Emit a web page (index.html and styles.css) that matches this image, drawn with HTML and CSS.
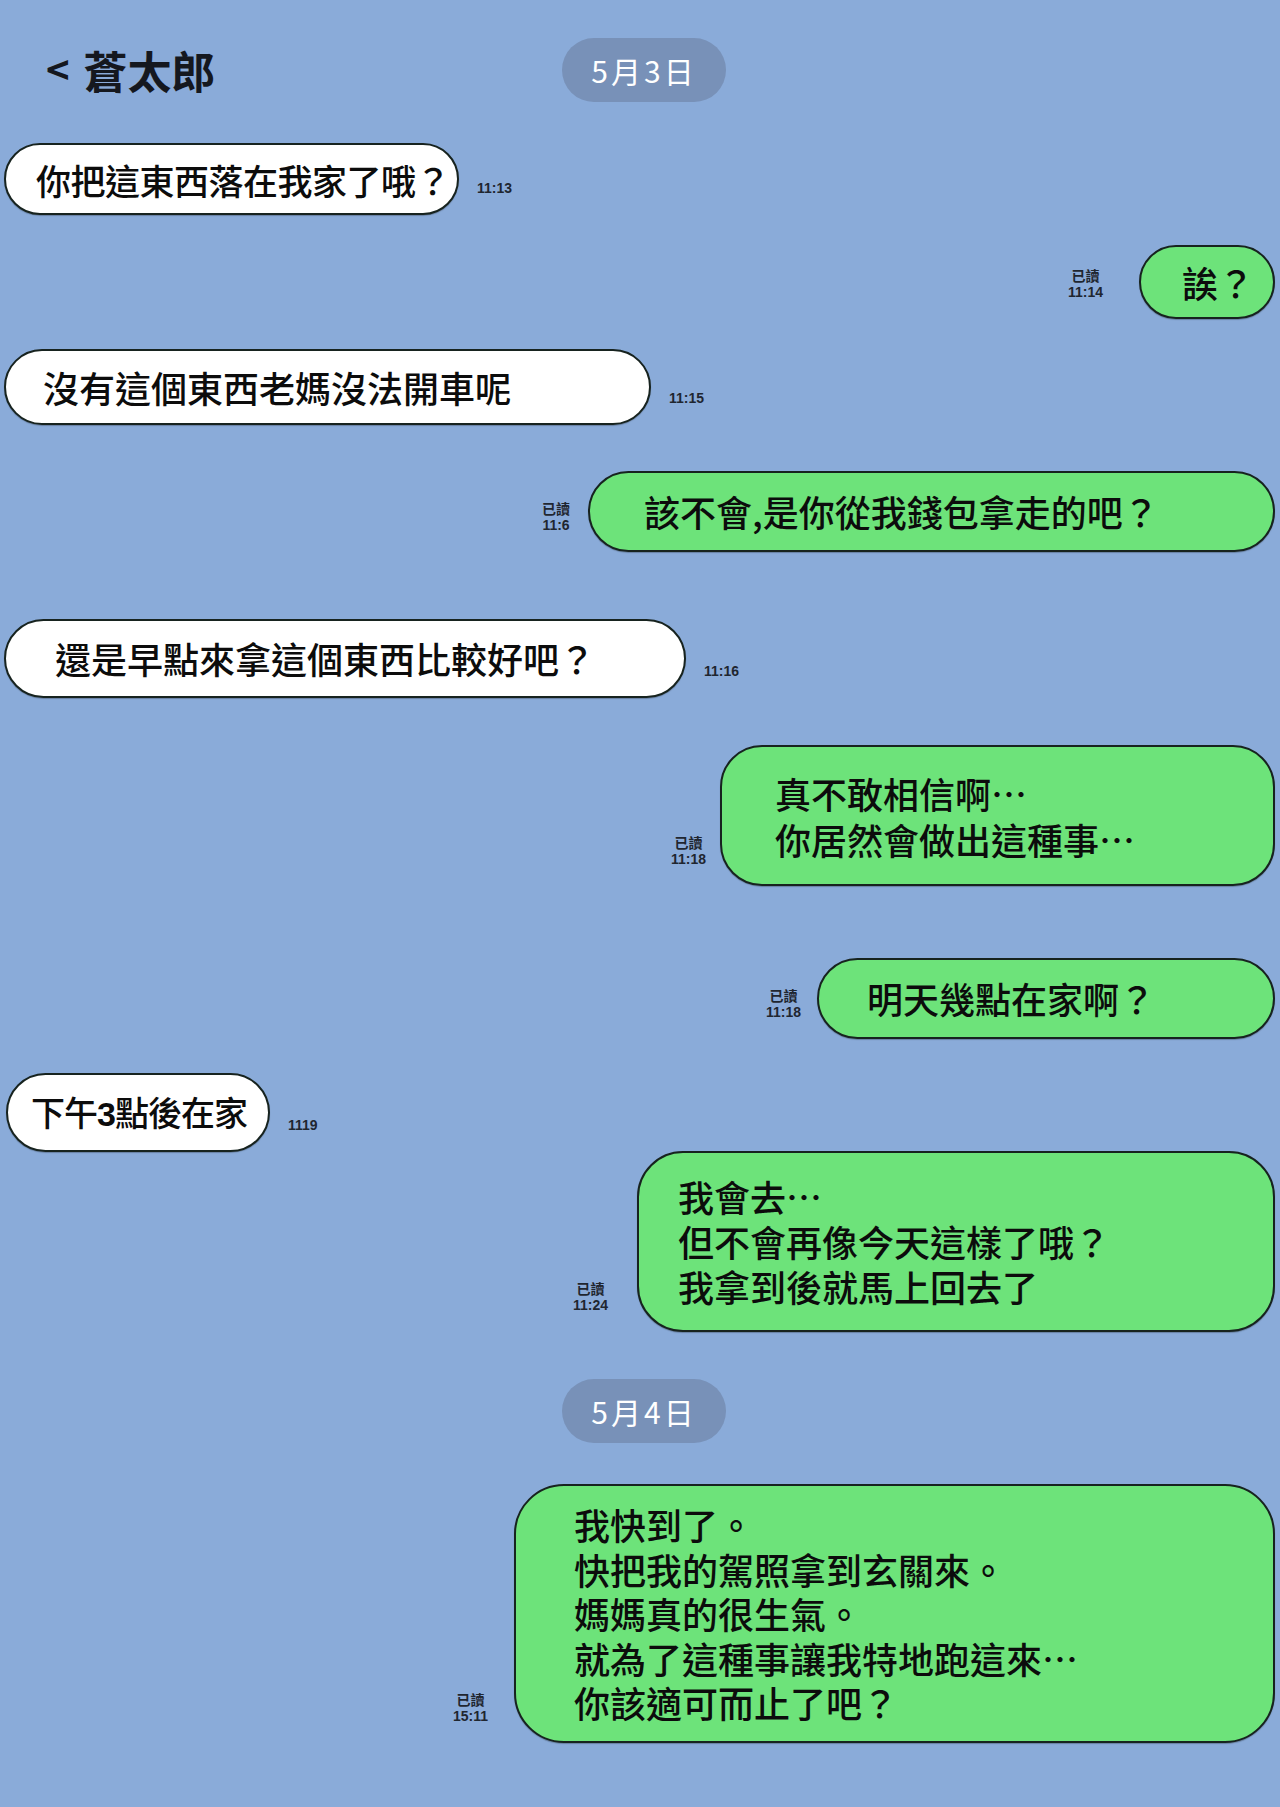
FILE: index.html
```html
<!DOCTYPE html>
<html lang="zh-Hant">
<head>
    <meta charset="UTF-8">
    <meta name="viewport" content="width=device-width, initial-scale=1.0">
    <title>蒼太郎</title>
    <link rel="stylesheet" href="styles.css">
</head>
<body>
    <div class="chat">
        <header class="top">
            <div class="title"><span class="back">&lt;</span>蒼太郎</div>
            <div class="date">5月3日</div>
            <div></div>
        </header>

        <div class="row in m1">
            <div class="bubble">你把這東西落在我家了哦？</div>
            <div class="meta"><span>11:13</span></div>
        </div>

        <div class="row out m2">
            <div class="meta"><span class="read">已讀</span><span>11:14</span></div>
            <div class="bubble">誒？</div>
        </div>

        <div class="row in m3">
            <div class="bubble">沒有這個東西老媽沒法開車呢</div>
            <div class="meta"><span>11:15</span></div>
        </div>

        <div class="row out m4">
            <div class="meta"><span class="read">已讀</span><span>11:6</span></div>
            <div class="bubble">該不會,是你從我錢包拿走的吧？</div>
        </div>

        <div class="row in m5">
            <div class="bubble">還是早點來拿這個東西比較好吧？</div>
            <div class="meta"><span>11:16</span></div>
        </div>

        <div class="row out m6">
            <div class="meta"><span class="read">已讀</span><span>11:18</span></div>
            <div class="bubble">
                <span>真不敢相信啊…</span>
                <span>你居然會做出這種事…</span>
            </div>
        </div>

        <div class="row out m7">
            <div class="meta"><span class="read">已讀</span><span>11:18</span></div>
            <div class="bubble">明天幾點在家啊？</div>
        </div>

        <div class="row in m8">
            <div class="bubble"><span>下午<b class="num">3</b>點後在家</span></div>
            <div class="meta"><span>1119</span></div>
        </div>

        <div class="row out m9">
            <div class="meta"><span class="read">已讀</span><span>11:24</span></div>
            <div class="bubble">
                <span>我會去…</span>
                <span>但不會再像今天這樣了哦？</span>
                <span>我拿到後就馬上回去了</span>
            </div>
        </div>

        <div class="day">
            <div class="date">5月4日</div>
        </div>

        <div class="row out m10">
            <div class="meta"><span class="read">已讀</span><span>15:11</span></div>
            <div class="bubble">
                <span>我快到了。</span>
                <span>快把我的駕照拿到玄關來。</span>
                <span>媽媽真的很生氣。</span>
                <span>就為了這種事讓我特地跑這來…</span>
                <span>你該適可而止了吧？</span>
            </div>
        </div>
    </div>
</body>
</html>
```

FILE: styles.css
```css
body {
    margin: 0;
    padding: 0;
    background-color: #8aabd9;
    font-family: "Noto Sans CJK TC", "Noto Sans CJK JP", sans-serif;
    color: #111;
}
.chat {
    width: 1280px;
    min-height: 1807px;
    box-sizing: border-box;
    padding: 38px 5px 40px 4px;
}
.top {
    display: grid;
    grid-template-columns: 1fr auto 1fr;
    align-items: center;
    height: 64px;
}
.title {
    padding-left: 42px;
    font-size: 44px;
    font-weight: 700;
    color: #15181f;
    display: flex;
    align-items: center;
}
.back {
    font-size: 40px;
    font-weight: 700;
    margin-right: 14px;
    position: relative;
    top: -2px;
}
.date {
    width: 164px;
    height: 64px;
    border-radius: 32px;
    background: #7891b8;
    color: #fff;
    font-size: 30px;
    letter-spacing: 3px;
    display: flex;
    align-items: center;
    justify-content: center;
    margin-left: 9px;
}
.day {
    display: flex;
    justify-content: center;
    margin-top: 47px;
}

/* message rows */
.row {
    display: flex;
    align-items: flex-end;
    column-gap: 18px;
}
.row.out {
    justify-content: flex-end;
}
.bubble {
    box-sizing: border-box;
    border: 2px solid #17231f;
    border-radius: 42px;
    display: flex;
    flex-direction: column;
    justify-content: center;
    font-size: 36px;
    font-weight: 500;
    line-height: 45px;
    color: #0c0c0c;
    white-space: nowrap;
    box-shadow: 0 1px 1px rgba(0, 0, 0, 0.25);
}
.in .bubble {
    background: #ffffff;
}
.out .bubble {
    background: #6de37a;
}
.num {
    font-family: "Liberation Sans", sans-serif;
    font-weight: 700;
}
.meta {
    display: flex;
    flex-direction: column;
    align-items: center;
    margin-bottom: 18px;
    font-family: "Liberation Sans Narrow", "Liberation Sans", sans-serif;
    font-stretch: condensed;
    font-size: 14px;
    font-weight: 700;
    line-height: 17px;
    color: #1f2630;
}
.meta .read {
    font-family: "Noto Sans CJK TC", sans-serif;
    font-size: 14px;
}

/* per message sizes, matching the screenshot */
.m1 { margin-top: 41px; }
.m1 .bubble { width: 455px; height: 72px; padding-left: 30px; font-size: 35px; letter-spacing: -0.5px; }
.m2 { margin-top: 30px; column-gap: 36px; }
.m2 .bubble { width: 136px; height: 74px; padding-left: 41px; }
.m3 { margin-top: 30px; }
.m3 .bubble { width: 647px; height: 76px; padding-left: 37px; }
.m4 { margin-top: 46px; }
.m4 .bubble { width: 687px; height: 81px; padding-left: 54px; }
.m5 { margin-top: 67px; }
.m5 .bubble { width: 682px; height: 79px; padding-left: 49px; }
.m6 { margin-top: 47px; column-gap: 14px; }
.m6 .bubble { width: 555px; height: 141px; padding-left: 53px; line-height: 46px; }
.m7 { margin-top: 72px; column-gap: 16px; }
.m7 .bubble { width: 458px; height: 81px; padding-left: 48px; }
.m8 { margin-top: 34px; }
.m8 .bubble { width: 264px; height: 79px; padding-left: 23px; margin-left: 2px; font-size: 34px; letter-spacing: -1px; }
.m9 { margin-top: -1px; column-gap: 29px; }
.m9 .bubble { width: 638px; height: 181px; padding-left: 39px; border-radius: 46px; }
.m10 { margin-top: 41px; column-gap: 26px; }
.m10 .bubble { width: 761px; height: 259px; padding-left: 58px; line-height: 44.5px; border-radius: 50px; }
```
